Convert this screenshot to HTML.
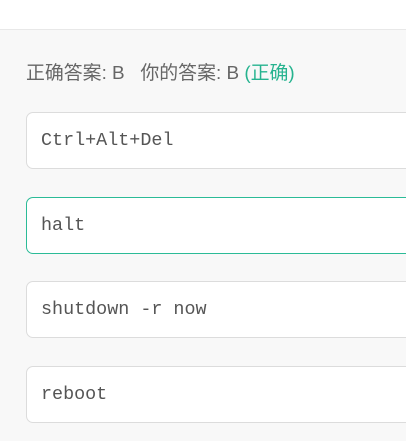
<!DOCTYPE html>
<html><head><style>
body{margin:0;width:406px;height:441px;overflow:hidden;background:#f8f8f8;font-family:"Liberation Sans","Noto Sans CJK SC",sans-serif;}
.top{height:29px;background:#fff;border-bottom:1px solid #e8e8e8;}
.ans{position:absolute;left:26px;top:58px;font-size:18.9px;color:#666;white-space:nowrap;}
.ans span{color:#26b38f}
.box{position:absolute;left:26px;width:400px;height:57px;box-sizing:border-box;background:#fff;border:1px solid #dcdcdc;border-radius:7px;font-family:"Liberation Mono",monospace;font-size:18.4px;color:#555;padding-left:14px;line-height:55px;}
.ok{border-color:#2bbb97}
</style></head><body>
<div class="top"></div>
<div class="ans">正确答案: B &nbsp; 你的答案: B <span>(正确)</span></div>
<div class="box" style="top:112px">Ctrl+Alt+Del</div>
<div class="box ok" style="top:197px">halt</div>
<div class="box" style="top:281px">shutdown -r now</div>
<div class="box" style="top:366px">reboot</div>
</body></html>
